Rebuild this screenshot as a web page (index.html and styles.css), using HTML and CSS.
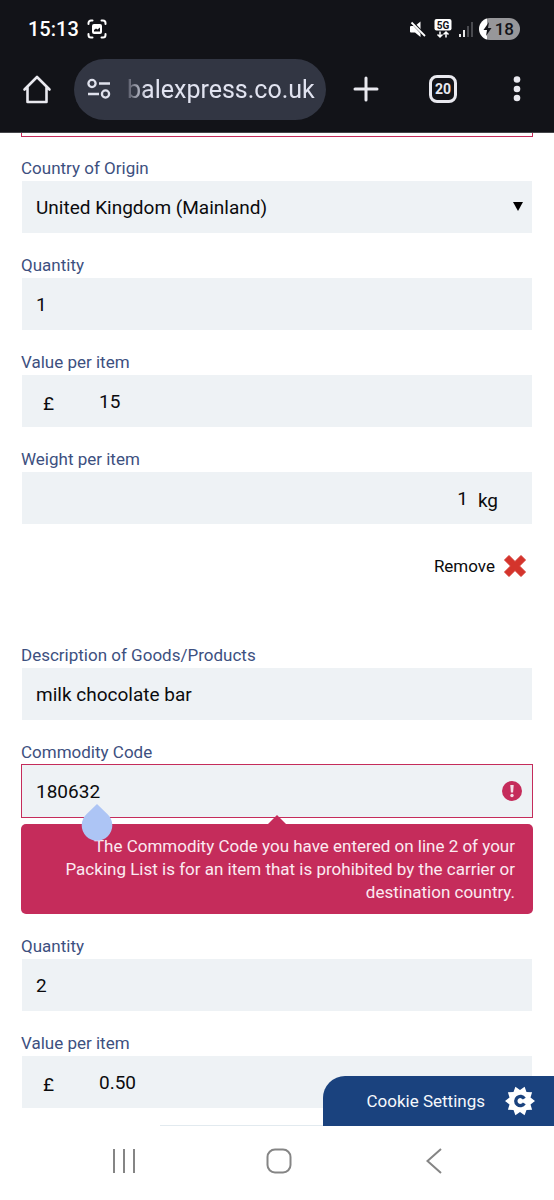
FILE: index.html
```html
<!DOCTYPE html>
<html lang="en">
<head>
<meta charset="utf-8">
<meta name="viewport" content="width=device-width, initial-scale=1">
<title>Packing List</title>
<link rel="stylesheet" href="styles.css">
</head>
<body>
<header class="chrome">
  <div class="status">
    <span class="clock">15:13</span>
    <svg class="capture" width="20" height="20" viewBox="0 0 20 20" fill="none" stroke="#fff" stroke-width="2" stroke-linecap="round"><path d="M1.500 5V4a2.500 2.500 0 0 1 2.500-2.500h1.500M14.500 1.500H16A2.500 2.500 0 0 1 18.500 4v1M18.500 15v1a2.500 2.500 0 0 1-2.500 2.500h-1.500M5.500 18.500H4A2.500 2.500 0 0 1 1.500 16v-1"/><rect x="5" y="5" width="10" height="10" rx="2" fill="#fff" stroke="none"/><path d="M7 12.500v-1.500l2-1.500 1.500 1 2.500-2v4z" fill="#121318" stroke="none"/></svg>
    <span class="spacer"></span>
    <svg width="18" height="18" viewBox="0 0 18 18"><path d="M2 6h4l5.500-4.500V17L6 12.500H2q-1 0-1-1V7q0-1 1-1z" fill="#fff"/><path d="M1 0 17 17" stroke="#121318" stroke-width="3"/><path d="M2.500 2.500 16 16" stroke="#fff" stroke-width="1.800"/></svg>
    <svg class="fiveg" width="18" height="20" viewBox="0 0 18 20"><rect x="0.500" width="17" height="11.500" rx="2" fill="#fff"/><text x="9" y="9.500" text-anchor="middle" class="tiny">5G</text><path d="M6 12.500v5.500M3.500 15.500 6 18l2.500-2.500M12 18.500V13M9.500 15.500 12 13l2.500 2.500" fill="none" stroke="#fff" stroke-width="1.500"/></svg>
    <svg class="signal" width="14" height="15" viewBox="0 0 14 15"><path d="M1 12v3M5 8v7" stroke="#fff" stroke-width="1.800"/><path d="M9 4v11M13 0v15" stroke="#5c5d61" stroke-width="1.500"/></svg>
    <span class="battery"><svg width="9" height="14" viewBox="0 0 9 14"><path d="M6 0 0.500 8H4L3 14l5.500-8H5z" fill="#121318"/></svg>18</span>
  </div>
  <div class="toolbar">
    <button class="tool home" aria-label="Home"><svg width="30" height="30" viewBox="0 0 30 30" fill="none" stroke="#e9e9ef" stroke-width="2.600" stroke-linejoin="round" stroke-linecap="round"><path d="M2.500 15.500 15 3l12.500 12.500M5.500 13v15h19V13"/></svg></button>
    <label class="omnibox">
      <svg width="24" height="22" viewBox="0 0 24 22" fill="none" stroke="#dfe1ec" stroke-width="2.300"><circle cx="5" cy="5.500" r="3.600"/><path d="M12 5.500h11M1 16h11"/><circle cx="18.500" cy="16" r="3.600"/></svg>
      <input class="url" type="text" value="balexpress.co.uk" aria-label="Address">
    </label>
    <button class="tool plus" aria-label="New tab"><svg width="26" height="26" viewBox="0 0 26 26"><path d="M13 2v22M2 13h22" stroke="#e9e9ef" stroke-width="3" stroke-linecap="round"/></svg></button>
    <button class="tool tabs" aria-label="Open tabs">20</button>
    <button class="tool more" aria-label="More"><svg width="8" height="28" viewBox="0 0 8 28" fill="#e9e9ef"><circle cx="4" cy="4.500" r="3.300"/><circle cx="4" cy="14" r="3.300"/><circle cx="4" cy="23" r="3.300"/></svg></button>
  </div>
</header>

<main class="page">
  <form class="form">
    <div class="cut"></div>
    <div class="field">
      <label for="origin">Country of Origin</label>
      <div class="box">
        <select id="origin"><option>United Kingdom (Mainland)</option></select>
        <svg class="arrow" width="10" height="9" viewBox="0 0 10 9"><path d="M0 0h10L5 9z"/></svg>
      </div>
    </div>
    <div class="field">
      <label for="qty1">Quantity</label>
      <div class="box"><input id="qty1" type="text" value="1"></div>
    </div>
    <div class="field">
      <label for="val1">Value per item</label>
      <div class="box"><span class="currency">£</span><input id="val1" type="text" value="15"></div>
    </div>
    <div class="field">
      <label for="wt1">Weight per item</label>
      <div class="box"><input class="right" id="wt1" type="text" value="1"><span class="unit">kg</span></div>
    </div>
    <button type="button" class="remove">Remove
      <svg width="24" height="24" viewBox="0 0 24 24"><path d="M6 1.500 12 7.500 18 1.500 22.500 6 16.500 12 22.500 18 18 22.500 12 16.500 6 22.500 1.500 18 7.500 12 1.500 6z" fill="#d4342c" stroke="#d4342c" stroke-linejoin="round"/></svg>
    </button>
    <div class="field">
      <label for="desc">Description of Goods/Products</label>
      <div class="box"><input id="desc" type="text" value="milk chocolate bar"></div>
    </div>
    <div class="field invalid">
      <label for="code">Commodity Code</label>
      <div class="box">
        <input id="code" type="text" value="180632" aria-describedby="code-error">
        <svg class="alert" width="20" height="20" viewBox="0 0 20 20"><circle cx="10" cy="10" r="10" fill="#c52c5b"/><path d="M8.300 4h3.400l-.6 7.500H8.900z" fill="#f3dfe8"/><circle cx="10" cy="14.500" r="1.700" fill="#f3dfe8"/></svg>
        <svg class="handle" width="32" height="38" viewBox="0 0 32 38"><path d="M16 1 26.800 11.500A15.300 15.300 0 1 1 5.200 11.500z" fill="#adc5f5"/></svg>
      </div>
      <p class="error" id="code-error">The Commodity Code you have entered on line 2 of your Packing List is for an item that is prohibited by the carrier or destination country.</p>
    </div>
    <div class="field">
      <label for="qty2">Quantity</label>
      <div class="box"><input id="qty2" type="text" value="2"></div>
    </div>
    <div class="field">
      <label for="val2">Value per item</label>
      <div class="box"><span class="currency">£</span><input id="val2" type="text" value="0.50"></div>
    </div>
  </form>
  <button class="cookie">Cookie Settings
    <svg width="30" height="30" viewBox="0 0 30 30"><path d="M30 15 25.500 18.400 27.100 23.800 21.500 23.900 19.600 29.300 15 26 10.400 29.300 8.500 23.900 2.900 23.800 4.500 18.400 0 15 4.500 11.600 2.900 6.200 8.500 6.100 10.400 .7 15 4 19.600 .7 21.500 6.100 27.100 6.200 25.500 11.600z" fill="#fff"/><path d="M19.300 12.600A4.600 4.600 0 1 0 19.300 17.400" fill="none" stroke="#1a427e" stroke-width="3.400"/></svg>
  </button>
</main>

<nav class="system">
  <button aria-label="Recent apps"><svg width="24" height="24" viewBox="0 0 24 24" stroke="#858585" stroke-width="2"><path d="M2 0v24M12 0v24M22 0v24"/></svg></button>
  <button aria-label="Home screen"><svg width="26" height="26" viewBox="0 0 26 26" fill="none" stroke="#858585" stroke-width="2"><rect x="1.500" y="1.500" width="23" height="23" rx="7.500"/></svg></button>
  <button aria-label="Back"><svg width="16" height="26" viewBox="0 0 16 26" fill="none" stroke="#858585" stroke-width="2"><path d="M15 1 1.500 13 15 25"/></svg></button>
</nav>
</body>
</html>
```

FILE: styles.css
```css
* { box-sizing: border-box; }
body {
  margin: 0;
  height: 100vh;
  display: flex;
  flex-direction: column;
  background: #fff;
  color: #0b0b0d;
  font-family: Roboto, "Liberation Sans", sans-serif;
}
svg { display: block; flex: none; }
button {
  border: 0;
  padding: 0;
  background: none;
  color: inherit;
  font: inherit;
}
input, select {
  flex: 1;
  min-width: 0;
  border: 0;
  padding: 0;
  background: none;
  color: inherit;
  font: inherit;
  outline: 0;
  appearance: none;
}

.chrome {
  flex: none;
  background: #121318;
  border-bottom: 1px solid #45464a;
  color: #fff;
}
.status {
  display: flex;
  align-items: center;
  height: 58px;
  padding: 0 34px 0 28px;
}
.clock { font-size: 20px; font-weight: 500; }
.capture { margin-left: 8px; }
.spacer { flex: 1; }
.fiveg { margin: 0 7px; }
.tiny { font: 700 10px Roboto, sans-serif; fill: #121318; }
.signal { margin-right: 6px; }
.battery {
  display: flex;
  align-items: center;
  gap: 3px;
  height: 22px;
  padding: 0 6px 0 4px;
  border-radius: 11px;
  background: linear-gradient(to right, #fff 8px, #97979a 8px);
  color: #121318;
  font-size: 17px;
  font-weight: 500;
}
.toolbar {
  display: flex;
  align-items: center;
  height: 74px;
  padding: 0 32px 12px 22px;
}
.tool { flex: none; display: grid; place-items: center; }
.omnibox {
  flex: 1;
  min-width: 0;
  display: flex;
  align-items: center;
  gap: 16px;
  height: 61px;
  margin: 0 27px 0 22px;
  padding: 0 10px 0 13px;
  border-radius: 31px;
  background: #323643;
}
.url {
  color: #e1e3f0;
  font-size: 25px;
  -webkit-mask-image: linear-gradient(to right, rgba(0, 0, 0, .2), #000 20px);
  mask-image: linear-gradient(to right, rgba(0, 0, 0, .2), #000 20px);
}
.tabs {
  width: 28px;
  height: 28px;
  margin: 0 56px 0 50px;
  border: 3px solid #e9e9ef;
  border-radius: 8px;
  color: #e9e9ef;
  font-size: 14px;
  font-weight: 700;
  line-height: 20px;
}
.more { margin-right: 1px; }

.page {
  flex: 1;
  min-height: 0;
  position: relative;
  overflow: hidden;
}
.page::after {
  content: "";
  position: absolute;
  left: 160px;
  right: 0;
  bottom: 0;
  height: 1px;
  background: #e2eaef;
}
.form { padding: 0 21px; font-size: 19px; }
.cut {
  height: 4px;
  margin-bottom: 19px;
  border: 1px solid #c52c5b;
  border-top: 0;
}
.field { margin-bottom: 19px; }
.field > label {
  display: block;
  color: #3d507f;
  font-size: 17px;
  line-height: 24px;
}
.box {
  position: relative;
  display: flex;
  align-items: center;
  height: 54px;
  padding: 0 14px;
  border: 1px solid #fff;
  background: #eef2f5;
  background-clip: padding-box;
}
.box input, .box select { align-self: stretch; }
.arrow { position: absolute; right: 9px; top: 21px; pointer-events: none; }
.currency { width: 63px; padding: 4px 0 0 7px; }
.right { text-align: right; }
.unit { padding: 4px 20px 0 10px; }
.remove {
  display: flex;
  align-items: center;
  gap: 8px;
  height: 44px;
  margin: 0 6px 55px auto;
  font-size: 17px;
}
.invalid .box { border-color: #c52c5b; }
.alert { margin-right: -4px; }
.handle { position: absolute; left: 59px; top: 38px; z-index: 1; }
.error {
  position: relative;
  margin: 6px 0 20px;
  padding: 11px 18px 10px;
  border-radius: 5px;
  background: #c52c5b;
  color: #fbeaf1;
  font-size: 17px;
  line-height: 23px;
  text-align: right;
}
.error::before {
  content: "";
  position: absolute;
  left: 50%;
  bottom: 100%;
  margin-left: -9px;
  border: 9px solid transparent;
  border-top: 0;
  border-bottom-color: #c52c5b;
}
.cookie {
  position: absolute;
  right: 0;
  bottom: 0;
  z-index: 2;
  display: flex;
  align-items: center;
  gap: 20px;
  height: 50px;
  padding: 0 19px 0 43px;
  border-radius: 22px 0 0 0;
  background: #1a427e;
  color: #f5f8fc;
  font-size: 17px;
}

.system {
  flex: none;
  display: flex;
  justify-content: space-around;
  align-items: center;
  height: 74px;
  padding: 0 42px 4px 46px;
}
.system button { width: 52px; display: grid; place-items: center; }
```
